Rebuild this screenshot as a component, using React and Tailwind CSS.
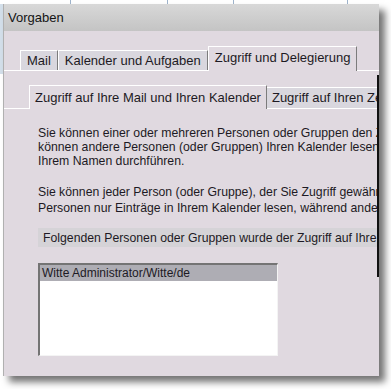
import React from "react";

const font = "font-['Liberation_Sans',Arial,sans-serif]";

function Tab({ label, active }) {
  if (active) {
    return (
      <div className="-mb-px flex h-[25px] items-start border-l border-t border-r border-l-white border-t-white border-r-[#7c7c7c] bg-[#e0d9e0] px-[6px] pt-[3px] text-[13px] leading-[16px] text-[#1d1a24]">
        {label}
      </div>
    );
  }
  return (
    <div className="flex h-[20px] items-center border-l border-t border-r border-l-white border-t-white border-r-[#7c7c7c] bg-[#d9d7de] px-[6px] text-[13px] leading-[16px] text-[#1d1a24]">
      {label}
    </div>
  );
}

export default function App() {
  return (
    <div className={`relative h-[389px] w-[391px] overflow-hidden bg-white ${font}`}>
      {/* what lies behind the dialog */}
      <div className="flex h-[4px] w-full">
        <div className="ml-[70px] w-px bg-[#9fb4cc]" />
        <div className="ml-[96px] w-px bg-[#9fb4cc]" />
        <div className="ml-[65px] w-px bg-[#9fb4cc]" />
        <div className="ml-[113px] w-px bg-[#9fb4cc]" />
      </div>
      <div className="absolute left-0 top-[4px] h-[70px] w-[3px] bg-[#d3dfea]" />

      {/* dialog */}
      <div className="relative ml-[3px] flex h-[372px] w-[376px] flex-col overflow-hidden border-l border-[#b0b0b0] bg-[#e0d9e0] shadow-[6px_6px_7px_rgba(0,0,0,0.55)]">
        <div className="flex h-[27px] shrink-0 items-center bg-gradient-to-b from-[#d8d8d8] to-[#c4c4c4] pl-[4px] text-[13px] text-[#141414]">
          Vorgaben
        </div>

        {/* top tabs */}
        <div className="mt-[15px] flex h-[25px] shrink-0 items-end border-b border-white pl-[16px]">
          <Tab label="Mail" />
          <Tab label="Kalender und Aufgaben" />
          <Tab label="Zugriff und Delegierung" active />
        </div>

        {/* sub tabs */}
        <div className="mt-[14px] flex h-[24px] shrink-0 items-end border-b border-white pl-[25px] whitespace-nowrap">
          <div className="-mb-px flex h-[24px] items-start border-l border-t border-r border-l-white border-t-white border-r-[#7c7c7c] bg-[#e0d9e0] px-[5px] pt-[4px] text-[13px] leading-[16px] text-[#1d1a24]">
            Zugriff auf Ihre Mail und Ihren Kalender
          </div>
          <div className="flex h-[21px] items-center border-t border-white bg-[#d9d7de] px-[5px] text-[13px] leading-[16px] text-[#1d1a24]">
            Zugriff auf Ihren Zeitplan
          </div>
        </div>

        <div className="flex flex-col pl-[34px] text-[12.25px] leading-[14px] text-[#1d1a24] whitespace-nowrap">
          <div className="mt-[17px] h-[42px]">
            Sie können einer oder mehreren Personen oder Gruppen den Zugriff auf Ihre Mail gewähren.
            <br />
            können andere Personen (oder Gruppen) Ihren Kalender lesen oder bearbeiten
            <br />
            Ihrem Namen durchführen.
          </div>
          <div className="mt-[16px] h-[30px] leading-[16px]">
            Sie können jeder Person (oder Gruppe), der Sie Zugriff gewähren, eine Zugriffsstufe
            <br />
            Personen nur Einträge in Ihrem Kalender lesen, während andere Personen
          </div>

          <div className="mt-[14px] flex h-[19px] shrink-0 items-center bg-[#d5d3d7] pl-[5px]">
            Folgenden Personen oder Gruppen wurde der Zugriff auf Ihre Mail gewährt:
          </div>

          <div className="mt-[16px] h-[93px] w-[240px] shrink-0 border-l-2 border-t-2 border-r border-b border-l-[#747474] border-t-[#747474] border-r-[#f4f4f4] border-b-[#f4f4f4] bg-white text-[12px]">
            <div className="flex h-[16px] items-center bg-[#aeadb4] pl-[2px]">
              Witte Administrator/Witte/de
            </div>
          </div>
        </div>

        <div className="absolute right-0 top-[71px] h-[202px] w-[2px] bg-[#111]" />
      </div>
    </div>
  );
}
